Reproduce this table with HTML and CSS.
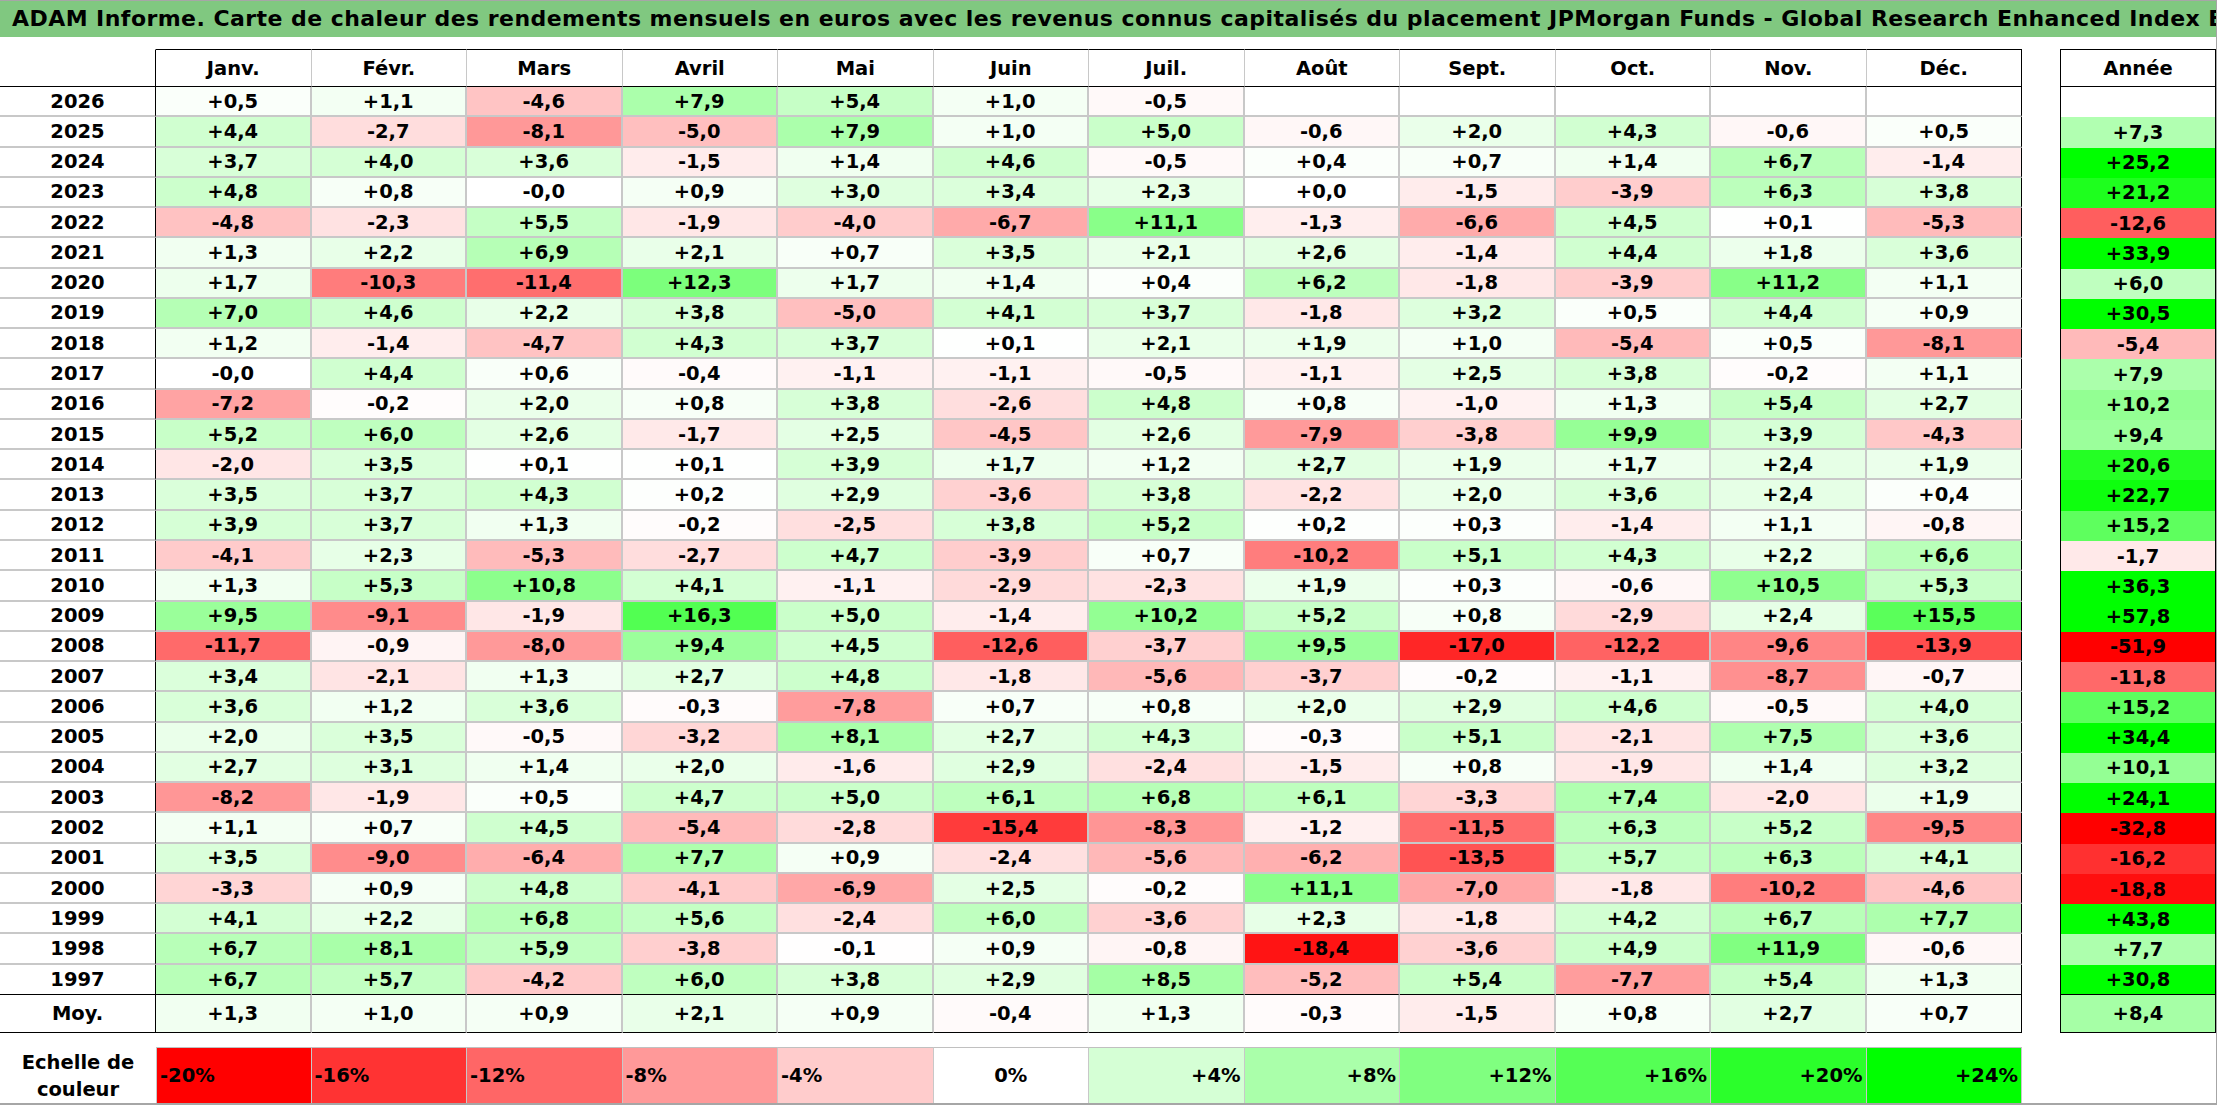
FILE: index.html
```html
<!DOCTYPE html>
<html lang="fr">
<head>
<meta charset="utf-8">
<title>ADAM Informe - Carte de chaleur</title>
<link rel="stylesheet" href="styles.css">
</head>
<body>
<div class="sheet">
  <div class="title">ADAM Informe. Carte de chaleur des rendements mensuels en euros avec les revenus connus capitalisés du placement JPMorgan Funds - Global Research Enhanced Index Equity (ESG) UCITS ETF</div>
  <div class="tables">
    <table class="main">
      <colgroup>
        <col class="c-year"><col class="c-m"><col class="c-m"><col class="c-m"><col class="c-m"><col class="c-m"><col class="c-m"><col class="c-m"><col class="c-m"><col class="c-m"><col class="c-m"><col class="c-m"><col class="c-m">
      </colgroup>
      <thead>
        <tr><th class="corner"></th><th>Janv.</th><th>Févr.</th><th>Mars</th><th>Avril</th><th>Mai</th><th>Juin</th><th>Juil.</th><th>Août</th><th>Sept.</th><th>Oct.</th><th>Nov.</th><th>Déc.</th></tr>
      </thead>
      <tbody>
        <tr><th>2026</th><td style="--v:0.5">+0,5</td><td style="--v:1.1">+1,1</td><td style="--v:-4.6">-4,6</td><td style="--v:7.9">+7,9</td><td style="--v:5.4">+5,4</td><td style="--v:1.0">+1,0</td><td style="--v:-0.5">-0,5</td><td></td><td></td><td></td><td></td><td></td></tr>
        <tr><th>2025</th><td style="--v:4.4">+4,4</td><td style="--v:-2.7">-2,7</td><td style="--v:-8.1">-8,1</td><td style="--v:-5.0">-5,0</td><td style="--v:7.9">+7,9</td><td style="--v:1.0">+1,0</td><td style="--v:5.0">+5,0</td><td style="--v:-0.6">-0,6</td><td style="--v:2.0">+2,0</td><td style="--v:4.3">+4,3</td><td style="--v:-0.6">-0,6</td><td style="--v:0.5">+0,5</td></tr>
        <tr><th>2024</th><td style="--v:3.7">+3,7</td><td style="--v:4.0">+4,0</td><td style="--v:3.6">+3,6</td><td style="--v:-1.5">-1,5</td><td style="--v:1.4">+1,4</td><td style="--v:4.6">+4,6</td><td style="--v:-0.5">-0,5</td><td style="--v:0.4">+0,4</td><td style="--v:0.7">+0,7</td><td style="--v:1.4">+1,4</td><td style="--v:6.7">+6,7</td><td style="--v:-1.4">-1,4</td></tr>
        <tr><th>2023</th><td style="--v:4.8">+4,8</td><td style="--v:0.8">+0,8</td><td style="--v:0">-0,0</td><td style="--v:0.9">+0,9</td><td style="--v:3.0">+3,0</td><td style="--v:3.4">+3,4</td><td style="--v:2.3">+2,3</td><td style="--v:0">+0,0</td><td style="--v:-1.5">-1,5</td><td style="--v:-3.9">-3,9</td><td style="--v:6.3">+6,3</td><td style="--v:3.8">+3,8</td></tr>
        <tr><th>2022</th><td style="--v:-4.8">-4,8</td><td style="--v:-2.3">-2,3</td><td style="--v:5.5">+5,5</td><td style="--v:-1.9">-1,9</td><td style="--v:-4.0">-4,0</td><td style="--v:-6.7">-6,7</td><td style="--v:11.1">+11,1</td><td style="--v:-1.3">-1,3</td><td style="--v:-6.6">-6,6</td><td style="--v:4.5">+4,5</td><td style="--v:0.1">+0,1</td><td style="--v:-5.3">-5,3</td></tr>
        <tr><th>2021</th><td style="--v:1.3">+1,3</td><td style="--v:2.2">+2,2</td><td style="--v:6.9">+6,9</td><td style="--v:2.1">+2,1</td><td style="--v:0.7">+0,7</td><td style="--v:3.5">+3,5</td><td style="--v:2.1">+2,1</td><td style="--v:2.6">+2,6</td><td style="--v:-1.4">-1,4</td><td style="--v:4.4">+4,4</td><td style="--v:1.8">+1,8</td><td style="--v:3.6">+3,6</td></tr>
        <tr><th>2020</th><td style="--v:1.7">+1,7</td><td style="--v:-10.3">-10,3</td><td style="--v:-11.4">-11,4</td><td style="--v:12.3">+12,3</td><td style="--v:1.7">+1,7</td><td style="--v:1.4">+1,4</td><td style="--v:0.4">+0,4</td><td style="--v:6.2">+6,2</td><td style="--v:-1.8">-1,8</td><td style="--v:-3.9">-3,9</td><td style="--v:11.2">+11,2</td><td style="--v:1.1">+1,1</td></tr>
        <tr><th>2019</th><td style="--v:7.0">+7,0</td><td style="--v:4.6">+4,6</td><td style="--v:2.2">+2,2</td><td style="--v:3.8">+3,8</td><td style="--v:-5.0">-5,0</td><td style="--v:4.1">+4,1</td><td style="--v:3.7">+3,7</td><td style="--v:-1.8">-1,8</td><td style="--v:3.2">+3,2</td><td style="--v:0.5">+0,5</td><td style="--v:4.4">+4,4</td><td style="--v:0.9">+0,9</td></tr>
        <tr><th>2018</th><td style="--v:1.2">+1,2</td><td style="--v:-1.4">-1,4</td><td style="--v:-4.7">-4,7</td><td style="--v:4.3">+4,3</td><td style="--v:3.7">+3,7</td><td style="--v:0.1">+0,1</td><td style="--v:2.1">+2,1</td><td style="--v:1.9">+1,9</td><td style="--v:1.0">+1,0</td><td style="--v:-5.4">-5,4</td><td style="--v:0.5">+0,5</td><td style="--v:-8.1">-8,1</td></tr>
        <tr><th>2017</th><td style="--v:0">-0,0</td><td style="--v:4.4">+4,4</td><td style="--v:0.6">+0,6</td><td style="--v:-0.4">-0,4</td><td style="--v:-1.1">-1,1</td><td style="--v:-1.1">-1,1</td><td style="--v:-0.5">-0,5</td><td style="--v:-1.1">-1,1</td><td style="--v:2.5">+2,5</td><td style="--v:3.8">+3,8</td><td style="--v:-0.2">-0,2</td><td style="--v:1.1">+1,1</td></tr>
        <tr><th>2016</th><td style="--v:-7.2">-7,2</td><td style="--v:-0.2">-0,2</td><td style="--v:2.0">+2,0</td><td style="--v:0.8">+0,8</td><td style="--v:3.8">+3,8</td><td style="--v:-2.6">-2,6</td><td style="--v:4.8">+4,8</td><td style="--v:0.8">+0,8</td><td style="--v:-1.0">-1,0</td><td style="--v:1.3">+1,3</td><td style="--v:5.4">+5,4</td><td style="--v:2.7">+2,7</td></tr>
        <tr><th>2015</th><td style="--v:5.2">+5,2</td><td style="--v:6.0">+6,0</td><td style="--v:2.6">+2,6</td><td style="--v:-1.7">-1,7</td><td style="--v:2.5">+2,5</td><td style="--v:-4.5">-4,5</td><td style="--v:2.6">+2,6</td><td style="--v:-7.9">-7,9</td><td style="--v:-3.8">-3,8</td><td style="--v:9.9">+9,9</td><td style="--v:3.9">+3,9</td><td style="--v:-4.3">-4,3</td></tr>
        <tr><th>2014</th><td style="--v:-2.0">-2,0</td><td style="--v:3.5">+3,5</td><td style="--v:0.1">+0,1</td><td style="--v:0.1">+0,1</td><td style="--v:3.9">+3,9</td><td style="--v:1.7">+1,7</td><td style="--v:1.2">+1,2</td><td style="--v:2.7">+2,7</td><td style="--v:1.9">+1,9</td><td style="--v:1.7">+1,7</td><td style="--v:2.4">+2,4</td><td style="--v:1.9">+1,9</td></tr>
        <tr><th>2013</th><td style="--v:3.5">+3,5</td><td style="--v:3.7">+3,7</td><td style="--v:4.3">+4,3</td><td style="--v:0.2">+0,2</td><td style="--v:2.9">+2,9</td><td style="--v:-3.6">-3,6</td><td style="--v:3.8">+3,8</td><td style="--v:-2.2">-2,2</td><td style="--v:2.0">+2,0</td><td style="--v:3.6">+3,6</td><td style="--v:2.4">+2,4</td><td style="--v:0.4">+0,4</td></tr>
        <tr><th>2012</th><td style="--v:3.9">+3,9</td><td style="--v:3.7">+3,7</td><td style="--v:1.3">+1,3</td><td style="--v:-0.2">-0,2</td><td style="--v:-2.5">-2,5</td><td style="--v:3.8">+3,8</td><td style="--v:5.2">+5,2</td><td style="--v:0.2">+0,2</td><td style="--v:0.3">+0,3</td><td style="--v:-1.4">-1,4</td><td style="--v:1.1">+1,1</td><td style="--v:-0.8">-0,8</td></tr>
        <tr><th>2011</th><td style="--v:-4.1">-4,1</td><td style="--v:2.3">+2,3</td><td style="--v:-5.3">-5,3</td><td style="--v:-2.7">-2,7</td><td style="--v:4.7">+4,7</td><td style="--v:-3.9">-3,9</td><td style="--v:0.7">+0,7</td><td style="--v:-10.2">-10,2</td><td style="--v:5.1">+5,1</td><td style="--v:4.3">+4,3</td><td style="--v:2.2">+2,2</td><td style="--v:6.6">+6,6</td></tr>
        <tr><th>2010</th><td style="--v:1.3">+1,3</td><td style="--v:5.3">+5,3</td><td style="--v:10.8">+10,8</td><td style="--v:4.1">+4,1</td><td style="--v:-1.1">-1,1</td><td style="--v:-2.9">-2,9</td><td style="--v:-2.3">-2,3</td><td style="--v:1.9">+1,9</td><td style="--v:0.3">+0,3</td><td style="--v:-0.6">-0,6</td><td style="--v:10.5">+10,5</td><td style="--v:5.3">+5,3</td></tr>
        <tr><th>2009</th><td style="--v:9.5">+9,5</td><td style="--v:-9.1">-9,1</td><td style="--v:-1.9">-1,9</td><td style="--v:16.3">+16,3</td><td style="--v:5.0">+5,0</td><td style="--v:-1.4">-1,4</td><td style="--v:10.2">+10,2</td><td style="--v:5.2">+5,2</td><td style="--v:0.8">+0,8</td><td style="--v:-2.9">-2,9</td><td style="--v:2.4">+2,4</td><td style="--v:15.5">+15,5</td></tr>
        <tr><th>2008</th><td style="--v:-11.7">-11,7</td><td style="--v:-0.9">-0,9</td><td style="--v:-8.0">-8,0</td><td style="--v:9.4">+9,4</td><td style="--v:4.5">+4,5</td><td style="--v:-12.6">-12,6</td><td style="--v:-3.7">-3,7</td><td style="--v:9.5">+9,5</td><td style="--v:-17.0">-17,0</td><td style="--v:-12.2">-12,2</td><td style="--v:-9.6">-9,6</td><td style="--v:-13.9">-13,9</td></tr>
        <tr><th>2007</th><td style="--v:3.4">+3,4</td><td style="--v:-2.1">-2,1</td><td style="--v:1.3">+1,3</td><td style="--v:2.7">+2,7</td><td style="--v:4.8">+4,8</td><td style="--v:-1.8">-1,8</td><td style="--v:-5.6">-5,6</td><td style="--v:-3.7">-3,7</td><td style="--v:-0.2">-0,2</td><td style="--v:-1.1">-1,1</td><td style="--v:-8.7">-8,7</td><td style="--v:-0.7">-0,7</td></tr>
        <tr><th>2006</th><td style="--v:3.6">+3,6</td><td style="--v:1.2">+1,2</td><td style="--v:3.6">+3,6</td><td style="--v:-0.3">-0,3</td><td style="--v:-7.8">-7,8</td><td style="--v:0.7">+0,7</td><td style="--v:0.8">+0,8</td><td style="--v:2.0">+2,0</td><td style="--v:2.9">+2,9</td><td style="--v:4.6">+4,6</td><td style="--v:-0.5">-0,5</td><td style="--v:4.0">+4,0</td></tr>
        <tr><th>2005</th><td style="--v:2.0">+2,0</td><td style="--v:3.5">+3,5</td><td style="--v:-0.5">-0,5</td><td style="--v:-3.2">-3,2</td><td style="--v:8.1">+8,1</td><td style="--v:2.7">+2,7</td><td style="--v:4.3">+4,3</td><td style="--v:-0.3">-0,3</td><td style="--v:5.1">+5,1</td><td style="--v:-2.1">-2,1</td><td style="--v:7.5">+7,5</td><td style="--v:3.6">+3,6</td></tr>
        <tr><th>2004</th><td style="--v:2.7">+2,7</td><td style="--v:3.1">+3,1</td><td style="--v:1.4">+1,4</td><td style="--v:2.0">+2,0</td><td style="--v:-1.6">-1,6</td><td style="--v:2.9">+2,9</td><td style="--v:-2.4">-2,4</td><td style="--v:-1.5">-1,5</td><td style="--v:0.8">+0,8</td><td style="--v:-1.9">-1,9</td><td style="--v:1.4">+1,4</td><td style="--v:3.2">+3,2</td></tr>
        <tr><th>2003</th><td style="--v:-8.2">-8,2</td><td style="--v:-1.9">-1,9</td><td style="--v:0.5">+0,5</td><td style="--v:4.7">+4,7</td><td style="--v:5.0">+5,0</td><td style="--v:6.1">+6,1</td><td style="--v:6.8">+6,8</td><td style="--v:6.1">+6,1</td><td style="--v:-3.3">-3,3</td><td style="--v:7.4">+7,4</td><td style="--v:-2.0">-2,0</td><td style="--v:1.9">+1,9</td></tr>
        <tr><th>2002</th><td style="--v:1.1">+1,1</td><td style="--v:0.7">+0,7</td><td style="--v:4.5">+4,5</td><td style="--v:-5.4">-5,4</td><td style="--v:-2.8">-2,8</td><td style="--v:-15.4">-15,4</td><td style="--v:-8.3">-8,3</td><td style="--v:-1.2">-1,2</td><td style="--v:-11.5">-11,5</td><td style="--v:6.3">+6,3</td><td style="--v:5.2">+5,2</td><td style="--v:-9.5">-9,5</td></tr>
        <tr><th>2001</th><td style="--v:3.5">+3,5</td><td style="--v:-9.0">-9,0</td><td style="--v:-6.4">-6,4</td><td style="--v:7.7">+7,7</td><td style="--v:0.9">+0,9</td><td style="--v:-2.4">-2,4</td><td style="--v:-5.6">-5,6</td><td style="--v:-6.2">-6,2</td><td style="--v:-13.5">-13,5</td><td style="--v:5.7">+5,7</td><td style="--v:6.3">+6,3</td><td style="--v:4.1">+4,1</td></tr>
        <tr><th>2000</th><td style="--v:-3.3">-3,3</td><td style="--v:0.9">+0,9</td><td style="--v:4.8">+4,8</td><td style="--v:-4.1">-4,1</td><td style="--v:-6.9">-6,9</td><td style="--v:2.5">+2,5</td><td style="--v:-0.2">-0,2</td><td style="--v:11.1">+11,1</td><td style="--v:-7.0">-7,0</td><td style="--v:-1.8">-1,8</td><td style="--v:-10.2">-10,2</td><td style="--v:-4.6">-4,6</td></tr>
        <tr><th>1999</th><td style="--v:4.1">+4,1</td><td style="--v:2.2">+2,2</td><td style="--v:6.8">+6,8</td><td style="--v:5.6">+5,6</td><td style="--v:-2.4">-2,4</td><td style="--v:6.0">+6,0</td><td style="--v:-3.6">-3,6</td><td style="--v:2.3">+2,3</td><td style="--v:-1.8">-1,8</td><td style="--v:4.2">+4,2</td><td style="--v:6.7">+6,7</td><td style="--v:7.7">+7,7</td></tr>
        <tr><th>1998</th><td style="--v:6.7">+6,7</td><td style="--v:8.1">+8,1</td><td style="--v:5.9">+5,9</td><td style="--v:-3.8">-3,8</td><td style="--v:-0.1">-0,1</td><td style="--v:0.9">+0,9</td><td style="--v:-0.8">-0,8</td><td style="--v:-18.4">-18,4</td><td style="--v:-3.6">-3,6</td><td style="--v:4.9">+4,9</td><td style="--v:11.9">+11,9</td><td style="--v:-0.6">-0,6</td></tr>
        <tr><th>1997</th><td style="--v:6.7">+6,7</td><td style="--v:5.7">+5,7</td><td style="--v:-4.2">-4,2</td><td style="--v:6.0">+6,0</td><td style="--v:3.8">+3,8</td><td style="--v:2.9">+2,9</td><td style="--v:8.5">+8,5</td><td style="--v:-5.2">-5,2</td><td style="--v:5.4">+5,4</td><td style="--v:-7.7">-7,7</td><td style="--v:5.4">+5,4</td><td style="--v:1.3">+1,3</td></tr>
      </tbody>
      <tfoot>
        <tr><th>Moy.</th><td style="--v:1.3">+1,3</td><td style="--v:1.0">+1,0</td><td style="--v:0.9">+0,9</td><td style="--v:2.1">+2,1</td><td style="--v:0.9">+0,9</td><td style="--v:-0.4">-0,4</td><td style="--v:1.3">+1,3</td><td style="--v:-0.3">-0,3</td><td style="--v:-1.5">-1,5</td><td style="--v:0.8">+0,8</td><td style="--v:2.7">+2,7</td><td style="--v:0.7">+0,7</td></tr>
      </tfoot>
    </table>
    <table class="year">
      <thead><tr><th>Année</th></tr></thead>
      <tbody>
        <tr><td></td></tr>
        <tr><td style="--v:7.3">+7,3</td></tr>
        <tr><td style="--v:25.2">+25,2</td></tr>
        <tr><td style="--v:21.2">+21,2</td></tr>
        <tr><td style="--v:-12.6">-12,6</td></tr>
        <tr><td style="--v:33.9">+33,9</td></tr>
        <tr><td style="--v:6.0">+6,0</td></tr>
        <tr><td style="--v:30.5">+30,5</td></tr>
        <tr><td style="--v:-5.4">-5,4</td></tr>
        <tr><td style="--v:7.9">+7,9</td></tr>
        <tr><td style="--v:10.2">+10,2</td></tr>
        <tr><td style="--v:9.4">+9,4</td></tr>
        <tr><td style="--v:20.6">+20,6</td></tr>
        <tr><td style="--v:22.7">+22,7</td></tr>
        <tr><td style="--v:15.2">+15,2</td></tr>
        <tr><td style="--v:-1.7">-1,7</td></tr>
        <tr><td style="--v:36.3">+36,3</td></tr>
        <tr><td style="--v:57.8">+57,8</td></tr>
        <tr><td style="--v:-51.9">-51,9</td></tr>
        <tr><td style="--v:-11.8">-11,8</td></tr>
        <tr><td style="--v:15.2">+15,2</td></tr>
        <tr><td style="--v:34.4">+34,4</td></tr>
        <tr><td style="--v:10.1">+10,1</td></tr>
        <tr><td style="--v:24.1">+24,1</td></tr>
        <tr><td style="--v:-32.8">-32,8</td></tr>
        <tr><td style="--v:-16.2">-16,2</td></tr>
        <tr><td style="--v:-18.8">-18,8</td></tr>
        <tr><td style="--v:43.8">+43,8</td></tr>
        <tr><td style="--v:7.7">+7,7</td></tr>
        <tr><td style="--v:30.8">+30,8</td></tr>
      </tbody>
      <tfoot><tr><td style="--v:8.4">+8,4</td></tr></tfoot>
    </table>
  </div>
  <div class="legend">
    <div class="legend-label">Echelle de<br>couleur</div>
    <div class="swatch neg" style="--v:-20">-20%</div>
    <div class="swatch neg" style="--v:-16">-16%</div>
    <div class="swatch neg" style="--v:-12">-12%</div>
    <div class="swatch neg" style="--v:-8">-8%</div>
    <div class="swatch neg" style="--v:-4">-4%</div>
    <div class="swatch zero" style="--v:0">0%</div>
    <div class="swatch pos" style="--v:4">+4%</div>
    <div class="swatch pos" style="--v:8">+8%</div>
    <div class="swatch pos" style="--v:12">+12%</div>
    <div class="swatch pos" style="--v:16">+16%</div>
    <div class="swatch pos" style="--v:20">+20%</div>
    <div class="swatch pos" style="--v:24">+24%</div>
  </div>
</div>
</body>
</html>
```
FILE: styles.css
```css
* { box-sizing: border-box; }

html, body {
  margin: 0;
  padding: 0;
  background: #ffffff;
}

body {
  font-family: "DejaVu Sans", "Liberation Sans", sans-serif;
  font-weight: bold;
  color: #000;
}

.sheet {
  width: 2217px;
  height: 1105px;
  border-top: 1px solid #a6a6a6;
  border-right: 1px solid #a6a6a6;
  border-bottom: 2px solid #a6a6a6;
  overflow: hidden;
  display: flex;
  flex-direction: column;
}

.title {
  height: 36px;
  line-height: 36px;
  background: #80c880;
  font-size: 22px;
  letter-spacing: 0.45px;
  padding-left: 12px;
  white-space: nowrap;
  overflow: hidden;
  flex: none;
}

.tables {
  margin-top: 12px;
  display: flex;
  align-items: flex-start;
  gap: 38px;
  flex: none;
}

table {
  border-collapse: separate;
  border-spacing: 0;
  table-layout: fixed;
}

th, td {
  padding: 0;
  text-align: center;
  vertical-align: middle;
  font-family: "DejaVu Sans", "Liberation Sans", sans-serif;
  font-weight: bold;
  font-size: 19.5px;
  white-space: nowrap;
  overflow: hidden;
}

td {
  --c-r: calc(255 - clamp(0, var(--v, 0), 24) * 10.625);
  --c-g: calc(255 + clamp(-20, var(--v, 0), 0) * 12.75);
  background: rgb(var(--c-r), var(--c-g), calc(var(--c-r) + var(--c-g) - 255));
}

/* main monthly table */
.main { width: 2022px; }
.main col.c-year { width: 156px; }
.main col.c-m { width: 155.5px; }

.main thead tr { height: 38px; }
.main thead th {
  border-top: 1px solid #000;
  border-bottom: 1px solid #000;
  border-right: 1px solid #c8c8c8;
  background: #fff;
}
.main thead th.corner {
  border-top: 1px solid #fff;
  border-right: 1px solid #000;
}
.main thead th:last-child { border-right: 1px solid #000; }

.main tbody tr { height: 30.27px; }
.main tbody th,
.main tbody td {
  border-bottom: 2px solid #c8c8c8;
  border-right: 2px solid #c8c8c8;
}
.main tbody th { border-right: 1px solid #000; background: #fff; }
.main tbody td:last-child { border-right: 1px solid #000; }
.main tbody tr:last-child th,
.main tbody tr:last-child td { border-bottom: 1px solid #000; }

.main tfoot tr { height: 38px; }
.main tfoot th,
.main tfoot td {
  border-bottom: 1px solid #000;
  border-right: 2px solid #c8c8c8;
}
.main tfoot th { border-right: 1px solid #000; background: #fff; }
.main tfoot td:last-child { border-right: 1px solid #000; }

/* yearly table */
.year {
  width: 156px;
  border: 1px solid #000;
}
.year thead tr { height: 37px; }
.year thead th {
  border-bottom: 1px solid #000;
  background: #fff;
}
.year tbody tr { height: 30.27px; }
.year tbody tr:last-child td { border-bottom: 1px solid #000; }
.year tfoot tr { height: 37px; }

/* colour scale legend */
.legend {
  margin-top: 14px;
  display: grid;
  grid-template-columns: 156px repeat(12, 155.5px);
  height: 56px;
  flex: none;
}

.legend-label {
  font-size: 19.5px;
  line-height: 27px;
  text-align: center;
  align-self: center;
  padding-top: 2px;
}

.swatch {
  --c-r: calc(255 - clamp(0, var(--v, 0), 24) * 10.625);
  --c-g: calc(255 + clamp(-20, var(--v, 0), 0) * 12.75);
  background: rgb(var(--c-r), var(--c-g), calc(var(--c-r) + var(--c-g) - 255));
  border-top: 1px solid #c0c0c0;
  border-right: 1px solid #c8c8c8;
  display: flex;
  align-items: center;
  font-size: 19.5px;
  padding: 0 3px;
}
.swatch:nth-child(2) { border-left: 1px solid #c8c8c8; }
.swatch.neg { justify-content: flex-start; }
.swatch.zero { justify-content: center; }
.swatch.pos { justify-content: flex-end; }
```
